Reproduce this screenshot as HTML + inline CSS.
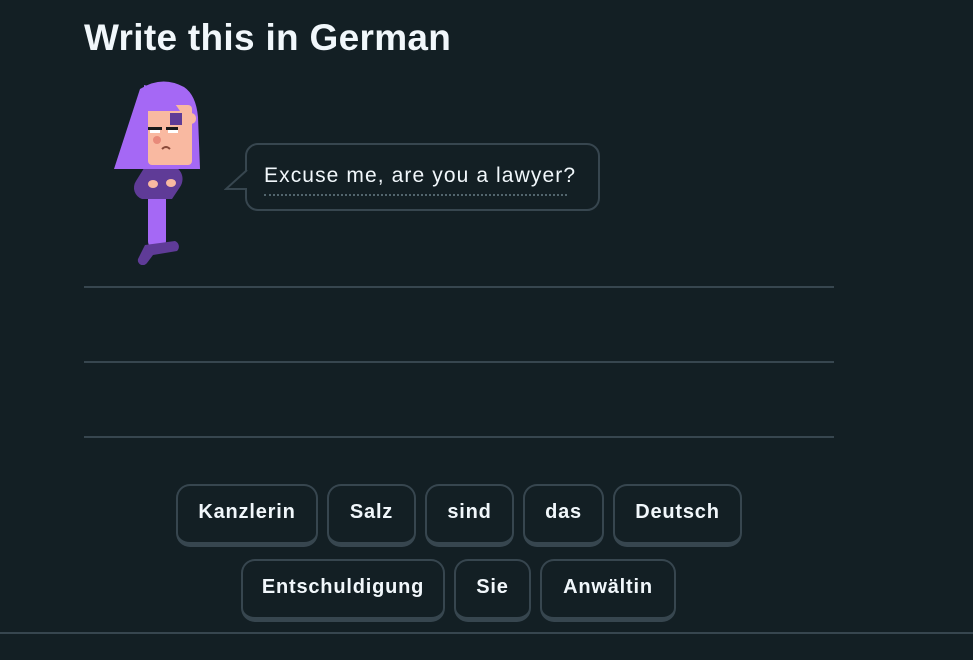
<!DOCTYPE html>
<html><head><style>
body{margin:0;width:973px;height:660px;background:#131f24;font-family:"Liberation Sans",sans-serif;overflow:hidden;position:relative;color:#f1f7fb}
h1{position:absolute;left:84px;top:17px;margin:0;font-size:37px;font-weight:bold;color:#f1f7fb;letter-spacing:0.3px}
.line{position:absolute;left:84px;width:750px;height:2px;background:#37464f}
.b{position:absolute;height:63px;border:2px solid #37464f;border-bottom-width:5px;border-radius:14px;box-sizing:border-box;display:flex;align-items:center;justify-content:center;font-size:20px;font-weight:bold;color:#f1f7fb;padding-bottom:3px;letter-spacing:0.8px}
.bub{position:absolute;left:245px;top:143px;width:355px;height:68px;border:2px solid #37464f;border-radius:13px;box-sizing:border-box}
.bub span{position:absolute;left:17px;top:19px;font-size:21px;color:#f1f7fb;letter-spacing:1.1px;white-space:nowrap}
</style></head><body>
<h1>Write this in German</h1>
<svg style="position:absolute;left:100px;top:75px" width="120" height="190" viewBox="0 0 120 190">
<rect x="48" y="100" width="18" height="75" rx="9" fill="#a568f5"/>
<path d="M45 170 l30 -4 a6 6 0 0 1 2 10 l-24 4 l-6 8 a5 5 0 0 1 -9 -4z" fill="#5f3b97"/>
<path d="M46 90 h22 a14 14 0 0 1 12 22 l-8 12 h-30 a12 12 0 0 1 -6 -18z" fill="#5f3b97"/>
<path d="M40 14 q22 -14 44 -2 q12 8 14 30 l2 52 h-86z" fill="#a568f5"/>
<rect x="48" y="30" width="44" height="60" rx="4" fill="#f9b9a1"/>
<path d="M44 10 q22 4 36 26 l-36 0z" fill="#a568f5"/>
<rect x="70" y="38" width="12" height="12" fill="#5f3b97"/>
<rect x="86" y="38" width="10" height="11" rx="5" fill="#f9b9a1"/>
<rect x="48" y="52" width="14" height="3" fill="#1a1a1a"/>
<rect x="66" y="52" width="12" height="3" fill="#1a1a1a"/>
<rect x="50" y="55" width="10" height="3" fill="#fff"/>
<rect x="68" y="55" width="10" height="3" fill="#fff"/>
<circle cx="57" cy="65" r="4" fill="#e88a7a"/>
<path d="M62 74 q4 -4 8 0" stroke="#8a4a3a" stroke-width="2" fill="none"/>
<ellipse cx="53" cy="109" rx="5" ry="4" fill="#f9b9a1"/>
<ellipse cx="71" cy="108" rx="5" ry="4" fill="#f9b9a1"/>
</svg>
<div class="bub"><span>Excuse me, are you a lawyer?</span>
<div style="position:absolute;left:17px;top:49px;width:303px;border-top:2px dotted #52656d"></div></div>
<svg style="position:absolute;left:224px;top:170px" width="24" height="22"><path d="M23 0 L2 19 L23 19" fill="#131f24" stroke="#37464f" stroke-width="2"/></svg>
<div class="line" style="top:286px"></div>
<div class="line" style="top:361px"></div>
<div class="line" style="top:436px"></div>
<div class="b" style="left:176px;top:484px;width:142px">Kanzlerin</div>
<div class="b" style="left:327px;top:484px;width:89px">Salz</div>
<div class="b" style="left:425px;top:484px;width:89px">sind</div>
<div class="b" style="left:523px;top:484px;width:81px">das</div>
<div class="b" style="left:613px;top:484px;width:129px">Deutsch</div>
<div class="b" style="left:241px;top:559px;width:204px">Entschuldigung</div>
<div class="b" style="left:454px;top:559px;width:77px">Sie</div>
<div class="b" style="left:540px;top:559px;width:136px">Anwältin</div>
<div style="position:absolute;left:0;top:632px;width:973px;height:2px;background:#37464f"></div>
</body></html>
